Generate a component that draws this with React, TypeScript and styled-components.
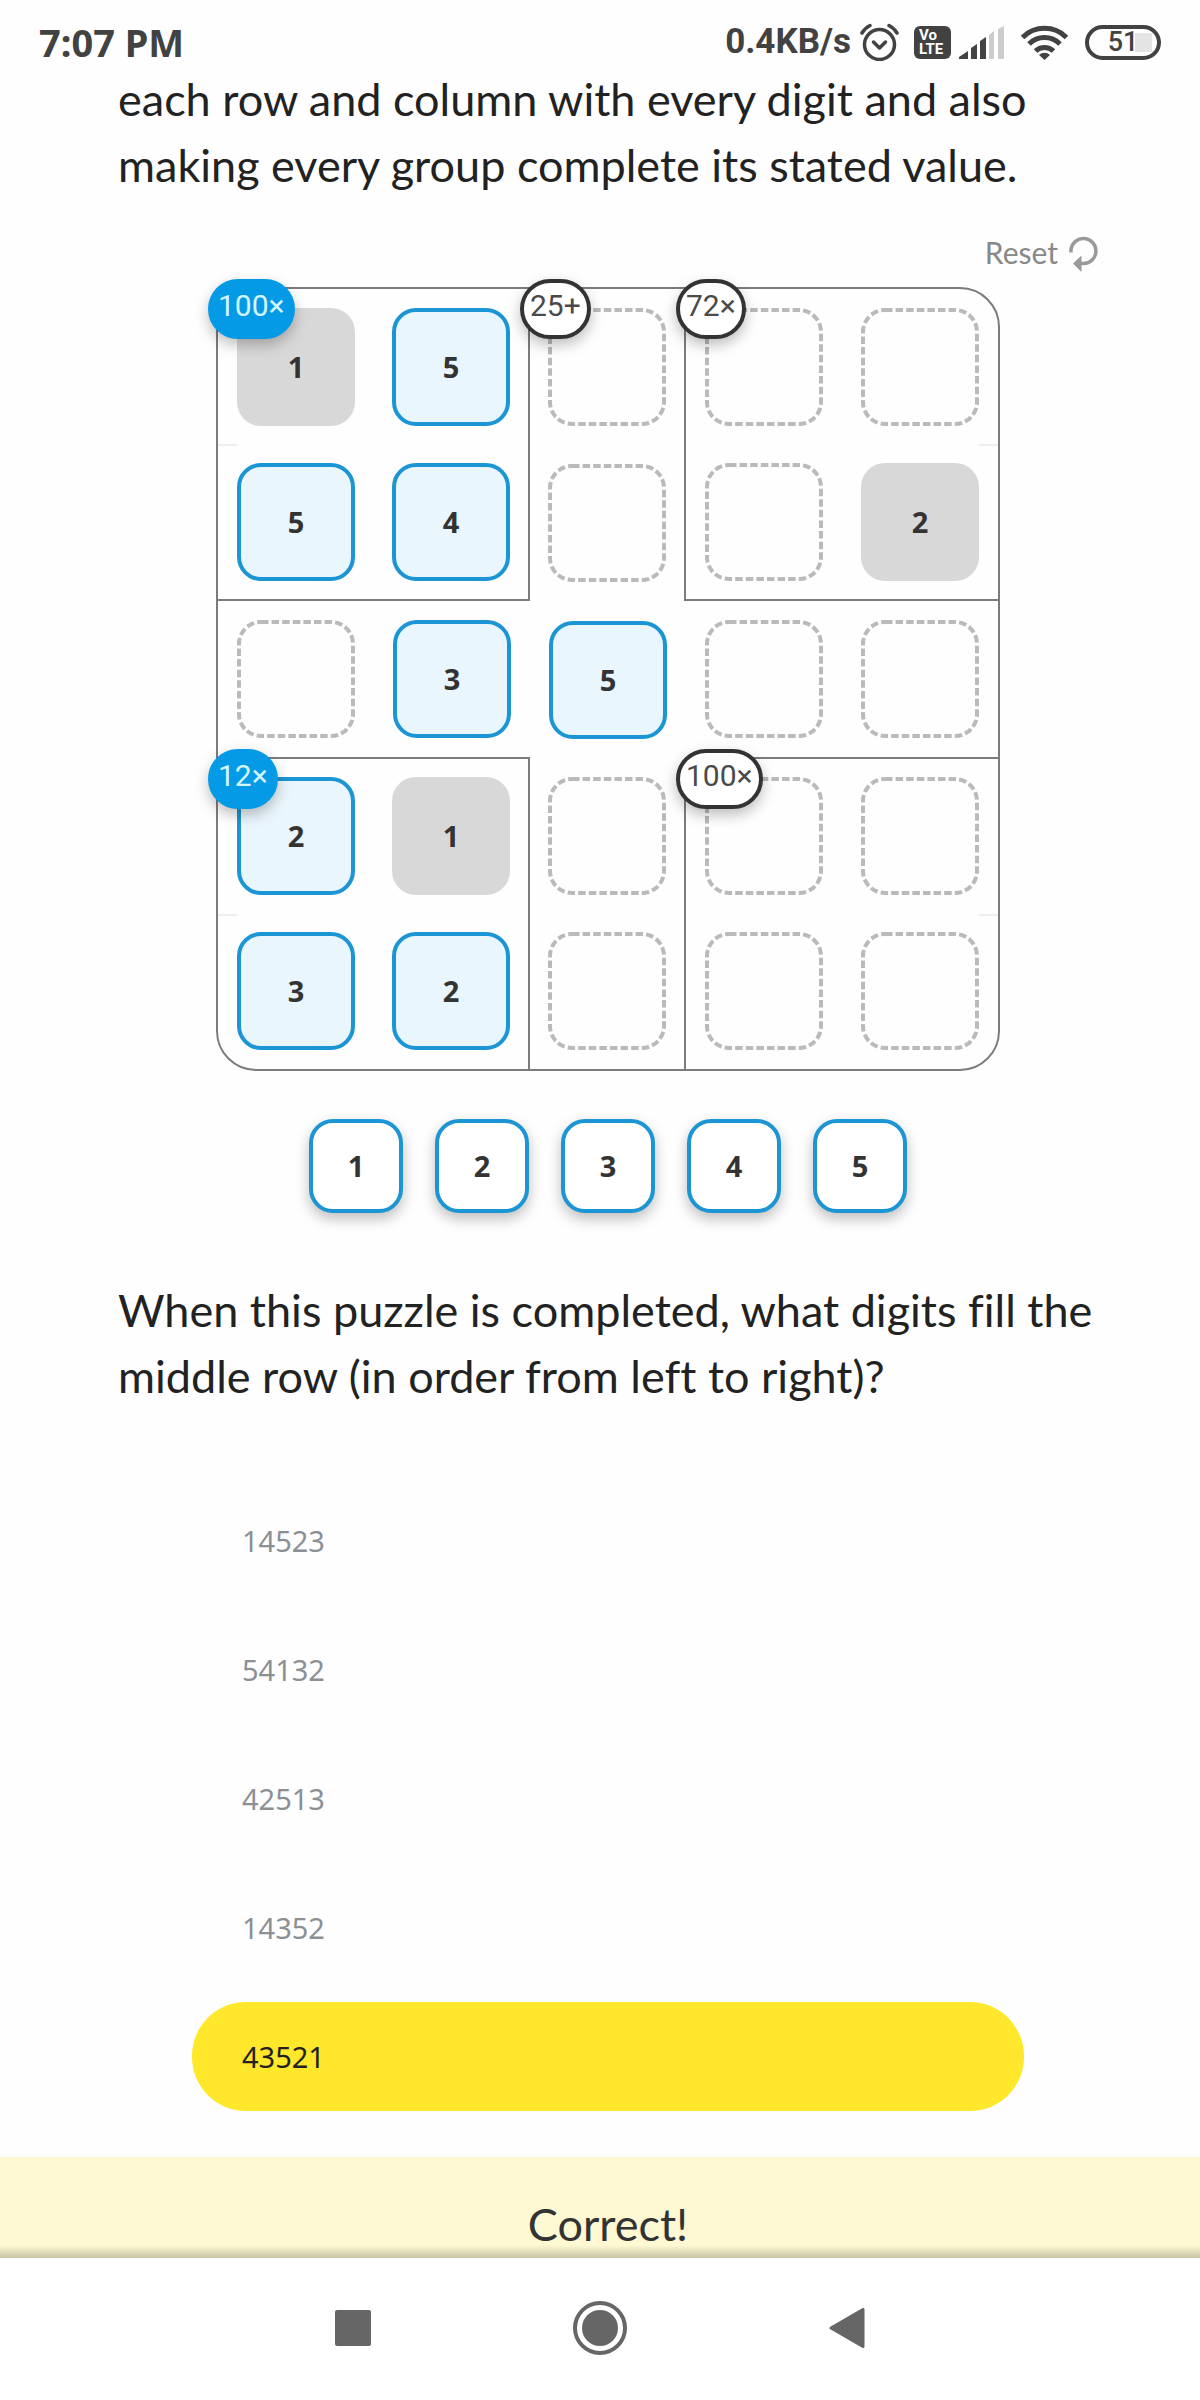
import React, { useState } from "react";
import styled, { createGlobalStyle, css } from "styled-components";

const GlobalStyle = createGlobalStyle`
  *, *::before, *::after { box-sizing: border-box; }
  body {
    margin: 0;
    background: #fefefe;
    color: #222;
    font-family: Lato, "Noto Sans", sans-serif;
    font-variant-ligatures: none;
  }
  button { font: inherit; color: inherit; border: 0; padding: 0; background: none; cursor: pointer; }
`;

const Page = styled.div`
  display: flex;
  flex-direction: column;
  min-height: 100vh;
`;

/* status bar */

const StatusBar = styled.header`
  display: flex;
  justify-content: space-between;
  align-items: center;
  height: 66px;
  padding: 18px 39px 0;
  color: #424242;
`;

const Clock = styled.time`
  font: 700 38px/48px "Noto Sans", sans-serif;
`;

const StatusIcons = styled.div`
  display: flex;
  align-items: center;
`;

const Speed = styled.span`
  font: 700 35px/48px Roboto, sans-serif;
  margin-right: 9px;
`;

const Icon = styled.svg<{ $gap?: number }>`
  display: block;
  flex: none;
  margin-right: ${(p) => p.$gap ?? 0}px;
`;

const VolteBadge = styled.span`
  display: flex;
  flex-direction: column;
  justify-content: center;
  width: 37px;
  height: 33px;
  margin-right: 8px;
  padding-left: 5px;
  border-radius: 6px;
  background: #424242;
  color: #fff;
  font: 700 15px/14px Roboto, sans-serif;
`;

const Battery = styled.span`
  display: flex;
  align-items: center;
  justify-content: center;
  width: 76px;
  height: 35px;
  border: 4px solid #424242;
  border-radius: 18px;
  background: linear-gradient(90deg, #e4e4e4, #e4e4e4) 46px 4px / 17px 19px no-repeat;
  font: 500 27px/27px Roboto, sans-serif;
`;

/* content */

const Content = styled.main`
  padding: 0 102px 0 118px;
`;

const Prose = styled.p`
  margin: 0;
  font-size: 45px;
  line-height: 66px;
`;

const Toolbar = styled.div`
  display: flex;
  justify-content: flex-end;
  height: 50px;
  margin-top: 29px;
`;

const ResetButton = styled.button`
  display: flex;
  align-items: center;
  gap: 11px;
  color: #888;
  font-size: 30px;
`;

const line = "2px solid #7c7c7c";

const Board = styled.div`
  display: grid;
  grid-template-columns: repeat(5, 1fr);
  width: 100%;
  max-width: 784px;
  aspect-ratio: 1;
  margin: 10px auto 0;
  border: ${line};
  border-radius: 40px;
`;

const Cell = styled.div<{ $bottom: boolean; $right: boolean; $tick?: "left" | "right" }>`
  position: relative;
  display: grid;
  place-items: center;
  border-bottom: ${(p) => (p.$bottom ? line : "0")};
  border-right: ${(p) => (p.$right ? line : "0")};
  ${(p) =>
    p.$tick &&
    css`
      background: linear-gradient(#eee, #eee) ${p.$tick} top / 19px 2px no-repeat;
    `}
`;

type Kind = "fixed" | "filled" | "empty";

const tileLook = {
  fixed: css`
    background: #d8d8d8;
  `,
  filled: css`
    background: #eaf6fd;
    border: 4px solid #1b95d3;
  `,
  empty: css``,
};

const Tile = styled.button<{ $kind: Kind }>`
  width: 118px;
  height: 118px;
  border-radius: 24px;
  color: #333;
  font: 700 29px/36px "Noto Sans", sans-serif;
  ${(p) => tileLook[p.$kind]}
`;

const DashedOutline = styled.svg`
  display: block;
  width: 118px;
  height: 118px;
`;

const Badge = styled.span<{ $done: boolean }>`
  position: absolute;
  top: -10px;
  left: -10px;
  z-index: 1;
  height: 60px;
  padding: 0 6px 6px;
  border: 4px solid ${(p) => (p.$done ? "#049ae5" : "#333")};
  border-radius: 30px;
  background: ${(p) => (p.$done ? "#049ae5" : "#fff")};
  color: ${(p) => (p.$done ? "#d5f6ff" : "#4a4a4a")};
  box-shadow: 0 6px 14px rgba(0, 0, 0, 0.25);
  font: 400 30px/46px Roboto, sans-serif;
  white-space: nowrap;
`;

const Palette = styled.div`
  display: flex;
  justify-content: center;
  gap: 32px;
  margin: 48px 0 64px;
`;

const PaletteKey = styled.button`
  width: 94px;
  height: 94px;
  border: 4px solid #1b95d3;
  border-radius: 24px;
  background: #fff;
  color: #333;
  box-shadow: 0 6px 14px rgba(0, 0, 0, 0.25);
  font: 700 29px/36px "Noto Sans", sans-serif;
`;

const Options = styled.div`
  display: flex;
  flex-direction: column;
  gap: 20px;
  max-width: 832px;
  margin: 77px auto 46px;
`;

const Option = styled.button<{ $chosen: boolean }>`
  height: 109px;
  padding: 0 50px;
  border-radius: 54px;
  background: ${(p) => (p.$chosen ? "#ffe82b" : "none")};
  color: ${(p) => (p.$chosen ? "#222" : "#8b9095")};
  font: 400 29px/36px "Noto Sans", sans-serif;
  text-align: left;
`;

const Verdict = styled.section`
  height: 101px;
  padding: 34px 102px 0 118px;
  background: linear-gradient(rgba(0, 0, 0, 0), rgba(0, 0, 0, 0.22)) bottom / 100% 13px no-repeat, #fff9d3;
  color: #333;
  font-size: 45px;
  line-height: 66px;
  text-align: center;
`;

const NavBar = styled.nav`
  display: grid;
  grid-template-columns: repeat(3, 247px);
  justify-content: center;
  flex: 1;
  min-height: 120px;
  padding-bottom: 2px;
  background: #fff;
`;

const NavButton = styled.button`
  display: grid;
  place-items: center;
`;

type CellData = { kind: Kind; value?: string; badge?: string; done?: boolean };

const e: CellData = { kind: "empty" };
const given = (value: string): CellData => ({ kind: "fixed", value });
const put = (value: string): CellData => ({ kind: "filled", value });

const rows: CellData[][] = [
  [{ ...given("1"), badge: "100×", done: true }, put("5"), { ...e, badge: "25+" }, { ...e, badge: "72×" }, e],
  [put("5"), put("4"), e, e, given("2")],
  [e, put("3"), put("5"), e, e],
  [{ ...put("2"), badge: "12×", done: true }, given("1"), e, { ...e, badge: "100×" }, e],
  [put("3"), put("2"), e, e, e],
];

/* group id of every cell; a line is drawn wherever two neighbours differ */
const groups = ["AABCC", "AABCC", "BBBBB", "DDBEE", "DDBEE"];

const answers = ["14523", "54132", "42513", "14352", "43521"];

export default function App() {
  const [chosen, setChosen] = useState("43521");

  return (
    <Page>
      <GlobalStyle />
      <StatusBar>
        <Clock>7:07 PM</Clock>
        <StatusIcons>
          <Speed>0.4KB/s</Speed>
          <Icon width="39" height="38" viewBox="0 0 39 38" $gap={15} fill="none" stroke="#424242" strokeLinecap="round">
            <circle cx="19.500" cy="21.500" r="15" strokeWidth="3.500" />
            <path d="M13.500 19l6 6 6-6" strokeWidth="3.500" strokeLinejoin="round" />
            <path d="M2 10q3-5 8-7.500M37 10q-3-5-8-7.500" strokeWidth="3.500" />
          </Icon>
          <VolteBadge>
            <span>Vo</span>
            <span>LTE</span>
          </VolteBadge>
          <Icon width="45" height="33" viewBox="0 0 45 33" $gap={17}>
            <path fill="#424242" d="M0 33v-2l9-6v8zM12 33V22l6-4v15zM21 33V15l6-4v22z" />
            <path fill="#cdcdcd" d="M30 33V9l5-4v28zM39 33V3l6-3v33z" />
          </Icon>
          <Icon width="47" height="35" viewBox="0 0 47 35" $gap={17} fill="none" stroke="#424242" strokeWidth="5">
            <path d="M1.500 12.500a31 31 0 0 1 44 0M8 19a22 22 0 0 1 31 0M14.500 26a13 13 0 0 1 18 0" />
            <path d="M23.500 35l-5.500-5a8 8 0 0 1 11 0z" fill="#424242" stroke="none" />
          </Icon>
          <Battery>51</Battery>
        </StatusIcons>
      </StatusBar>

      <Content>
        <Prose>each row and column with every digit and also making every group complete its stated value.</Prose>

        <Toolbar>
          <ResetButton type="button">
            Reset
            <Icon width="29" height="39" viewBox="0 0 29 39">
              <path d="M2 19.500V16.500a12.500 12.500 0 1 1 12.500 14H10" fill="none" stroke="#999" strokeWidth="3.500" />
              <path d="M12.500 22.500V39L4 30.500z" fill="#999" />
            </Icon>
          </ResetButton>
        </Toolbar>

        <Board>
          {rows.map((row, r) =>
            row.map((cell, c) => (
              <Cell
                key={`${r}-${c}`}
                $bottom={r < 4 && groups[r][c] !== groups[r + 1][c]}
                $right={c < 4 && groups[r][c] !== groups[r][c + 1]}
                $tick={r === 1 || r === 4 ? (c === 0 ? "left" : c === 4 ? "right" : undefined) : undefined}
              >
                {cell.badge && <Badge $done={!!cell.done}>{cell.badge}</Badge>}
                <Tile type="button" $kind={cell.kind} aria-label={cell.value ?? "Empty cell"}>
                  {cell.value ?? (
                    <DashedOutline viewBox="0 0 118 118">
                      <rect
                        x="2"
                        y="2"
                        width="114"
                        height="114"
                        rx="22"
                        fill="none"
                        stroke="#bababa"
                        strokeWidth="4"
                        strokeDasharray="7.500 3.100"
                      />
                    </DashedOutline>
                  )}
                </Tile>
              </Cell>
            ))
          )}
        </Board>

        <Palette>
          {["1", "2", "3", "4", "5"].map((d) => (
            <PaletteKey key={d} type="button">
              {d}
            </PaletteKey>
          ))}
        </Palette>

        <Prose>When this puzzle is completed, what digits fill the middle row (in order from left to right)?</Prose>

        <Options>
          {answers.map((a) => (
            <Option key={a} type="button" $chosen={a === chosen} onClick={() => setChosen(a)}>
              {a}
            </Option>
          ))}
        </Options>
      </Content>

      <Verdict>Correct!</Verdict>

      <NavBar>
        <NavButton type="button" aria-label="Recent apps">
          <Icon width="36" height="36" viewBox="0 0 36 36">
            <rect width="36" height="36" rx="2" fill="#666" />
          </Icon>
        </NavButton>
        <NavButton type="button" aria-label="Home">
          <Icon width="54" height="54" viewBox="0 0 54 54">
            <circle cx="27" cy="27" r="25" fill="none" stroke="#666" strokeWidth="4" />
            <circle cx="27" cy="27" r="18" fill="#666" />
          </Icon>
        </NavButton>
        <NavButton type="button" aria-label="Back">
          <Icon width="36" height="40" viewBox="0 0 36 40">
            <path d="M34 1.500v37L2 20z" fill="#666" stroke="#666" strokeWidth="3" strokeLinejoin="round" />
          </Icon>
        </NavButton>
      </NavBar>
    </Page>
  );
}
